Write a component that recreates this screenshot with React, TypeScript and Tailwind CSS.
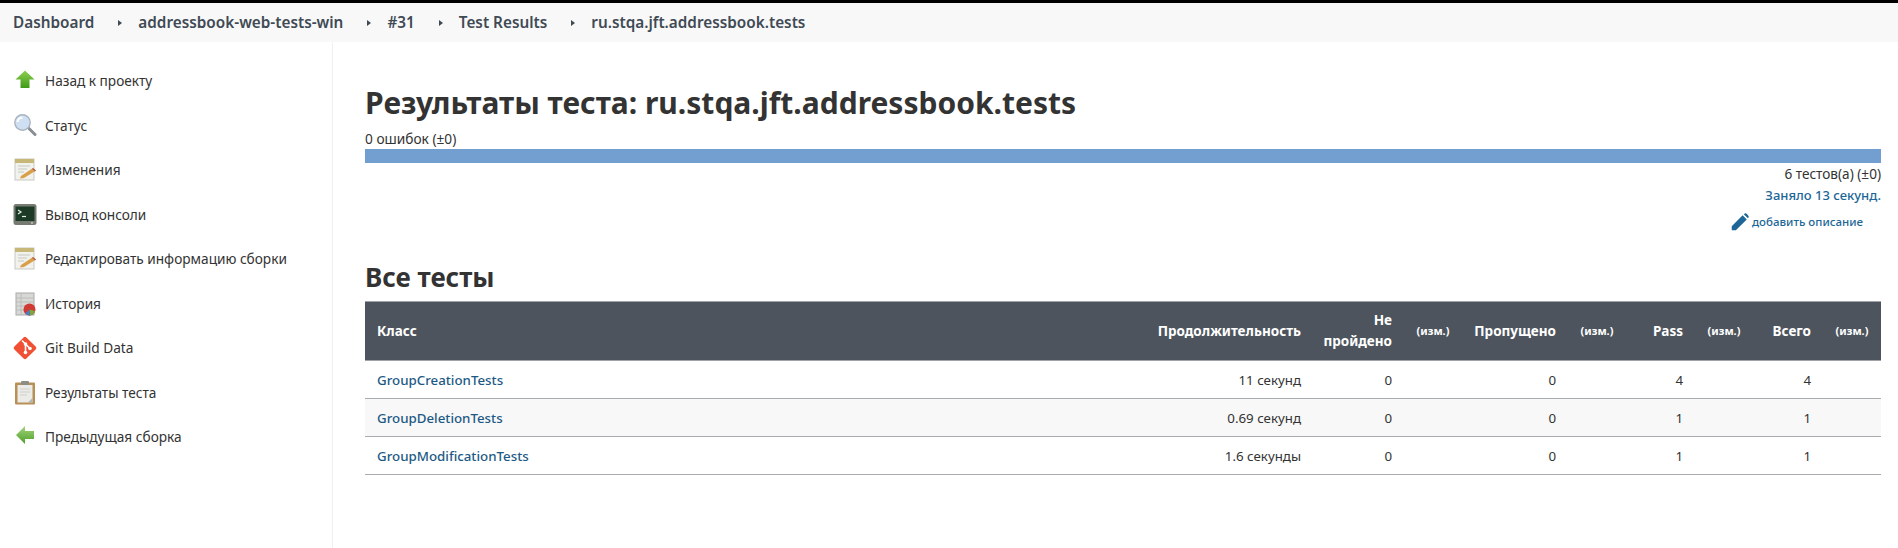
const crumbs = ['Dashboard', 'addressbook-web-tests-win', '#31', 'Test Results', 'ru.stqa.jft.addressbook.tests'];

function ArrowUpIcon() {
  return (
    <svg viewBox="0 0 24 24" className="w-6 h-6">
      <defs>
        <linearGradient id="up" x1="0" y1="0" x2="0" y2="1">
          <stop offset="0" stopColor="#8fd050" />
          <stop offset="1" stopColor="#3f9a18" />
        </linearGradient>
      </defs>
      <path d="M12 1.5 L21.5 10.5 H16.5 V19 H7.5 V10.5 H2.5 Z" fill="url(#up)" />
    </svg>
  );
}

function ArrowLeftIcon() {
  return (
    <svg viewBox="0 0 24 24" className="w-6 h-6">
      <defs>
        <linearGradient id="left" x1="0" y1="0" x2="0" y2="1">
          <stop offset="0" stopColor="#a3d47a" />
          <stop offset="1" stopColor="#4f9f2a" />
        </linearGradient>
      </defs>
      <path d="M3 10 L12 1 V6 H21 V14 H12 V19 Z" fill="url(#left)" />
    </svg>
  );
}

function SearchIcon() {
  return (
    <svg viewBox="0 0 24 24" className="w-6 h-6">
      <path d="M15.5 14 L22 20.5" stroke="#8a8f94" strokeWidth="3" strokeLinecap="round" />
      <circle cx="9.5" cy="8.5" r="7.7" fill="#cfe0f4" stroke="#a9b4bf" strokeWidth="1.4" />
      <path d="M4.5 8 a5 5 0 0 1 5 -4.5" stroke="#fff" strokeWidth="2" fill="none" />
    </svg>
  );
}

function NotepadIcon() {
  return (
    <svg viewBox="0 0 24 24" className="w-6 h-6">
      <rect x="2" y="1" width="19" height="21" fill="#f1f1ed" stroke="#c9c9c3" />
      <rect x="2" y="1" width="19" height="4" fill="#c8b878" />
      <path d="M5 8 H17 M5 11 H14 M5 14 H11" stroke="#c9c9c3" />
      <path d="M8 18 L20 10 L23 12.5 L11 20 L7 20.5 Z" fill="#d9a04a" />
      <path d="M20 10 L23 12.5 L22 13.5 L19 11 Z" fill="#b8604c" />
    </svg>
  );
}

function TerminalIcon() {
  return (
    <svg viewBox="0 0 24 24" className="w-6 h-6">
      <rect x="0.5" y="1" width="23" height="21" rx="2.5" fill="#777c72" />
      <rect x="2.5" y="3.5" width="19" height="14.5" fill="#1d3a26" />
      <path d="M5 7 L8 9 L5 11" stroke="#e4efe4" strokeWidth="1.2" fill="none" />
      <path d="M9 13.5 H13" stroke="#e4efe4" strokeWidth="1.2" />
      <rect x="18" y="19.4" width="2" height="1.2" fill="#d4d8d0" />
    </svg>
  );
}

function HistoryIcon() {
  return (
    <svg viewBox="0 0 24 24" className="w-6 h-6">
      <rect x="3" y="1" width="18" height="22" fill="#d8d8d6" stroke="#a8aaa8" />
      <path d="M8 1 V23 M3 6 H21 M3 10 H21 M3 14 H21 M3 18 H21" stroke="#bcbcba" />
      <circle cx="16.5" cy="17.5" r="6" fill="#d03a35" />
      <path d="M16.5 17.5 L22 19 A6 6 0 0 1 17 23.4 Z" fill="#7aa83c" />
      <path d="M16.5 17.5 L17 23.4 A6 6 0 0 1 12 21.5 Z" fill="#4f7fb8" />
    </svg>
  );
}

function GitIcon() {
  return (
    <svg viewBox="0 0 24 24" className="w-6 h-6">
      <rect x="3.5" y="3.5" width="17" height="17" rx="2" transform="rotate(45 12 12)" fill="#f05033" />
      <path d="M9 4.5 L12.5 8 M12.5 8 V16 M12.5 8 L17 12.5" stroke="#fff" strokeWidth="1.6" />
      <circle cx="12.5" cy="8" r="1.8" fill="#fff" />
      <circle cx="12.5" cy="16.5" r="1.8" fill="#fff" />
      <circle cx="17" cy="12.5" r="1.8" fill="#fff" />
    </svg>
  );
}

function ClipboardIcon() {
  return (
    <svg viewBox="0 0 24 24" className="w-6 h-6">
      <rect x="2" y="1.5" width="20" height="22" rx="1" fill="#b98f56" />
      <rect x="4.5" y="4" width="15" height="17.5" fill="#ebebe8" />
      <path d="M7 8 H17 M7 11 H17 M7 14 H14" stroke="#cfcfcb" />
      <path d="M15 21.5 L19.5 17 V21.5 Z" fill="#b4b4b0" />
      <rect x="8" y="0" width="8" height="4" rx="1" fill="#8c8c88" />
    </svg>
  );
}

function PencilIcon() {
  return (
    <svg viewBox="0 0 24 24" className="w-[18px] h-[18px]">
      <path
        d="M1 23 V17.5 L15.5 3 L21 8.5 L6.5 23 Z M17 1.5 L18.5 0.5 Q19.5 0 20.5 0.8 L23.2 3.5 Q24 4.5 23.5 5.5 L22.5 7 Z"
        fill="#1c6797"
      />
    </svg>
  );
}

const sideItems = [
  { label: 'Назад к проекту', icon: <ArrowUpIcon /> },
  { label: 'Статус', icon: <SearchIcon /> },
  { label: 'Изменения', icon: <NotepadIcon /> },
  { label: 'Вывод консоли', icon: <TerminalIcon /> },
  { label: 'Редактировать информацию сборки', icon: <NotepadIcon /> },
  { label: 'История', icon: <HistoryIcon /> },
  { label: 'Git Build Data', icon: <GitIcon /> },
  { label: 'Результаты теста', icon: <ClipboardIcon /> },
  { label: 'Предыдущая сборка', icon: <ArrowLeftIcon /> },
];

const rows = [
  { name: 'GroupCreationTests', time: '11 секунд', pass: 4, total: 4 },
  { name: 'GroupDeletionTests', time: '0.69 секунд', pass: 1, total: 1 },
  { name: 'GroupModificationTests', time: '1.6 секунды', pass: 1, total: 1 },
];

export default function App() {
  return (
    <div className="h-[548px] overflow-hidden bg-white text-[#333] text-[13.3px] font-['Noto_Sans','Open_Sans',sans-serif]">
      <div className="h-[3px] bg-black" />

      {/* Breadcrumbs */}
      <div className="h-[39px] bg-[#f8f8f8] flex items-center pl-[13px] text-[15.3px] font-semibold text-[#3f4a55]">
        {crumbs.map((crumb, i) => (
          <div key={crumb} className="flex items-center">
            {i > 0 && (
              <span className="ml-[24px] mr-[16px] border-y-[3.5px] border-l-[4px] border-y-transparent border-l-[#3f4a55]" />
            )}
            <span>{crumb}</span>
          </div>
        ))}
      </div>

      <div className="flex h-[506px]">
        {/* Sidebar */}
        <div className="w-[333px] shrink-0 border-r border-[#f0f0f2] pt-[17px] pl-[13px]">
          {sideItems.map((item) => (
            <div key={item.label} className="h-[44.5px] flex items-center gap-2 text-[13.65px] text-[#333]">
              {item.icon}
              <span>{item.label}</span>
            </div>
          ))}
        </div>

        {/* Main */}
        <div className="flex-1 pl-[32px] pr-[17px]">
          <h1 className="mt-[40px] text-[30px] leading-[42px] font-bold text-[#333]">
            Результаты теста: ru.stqa.jft.addressbook.tests
          </h1>
          <div className="mt-[6px] text-[13.7px] leading-[18px]">0 ошибок (±0)</div>
          <div className="mt-px h-[14px] bg-[#729fcf]" />
          <div className="text-right text-[13.6px] leading-[18px] mt-[2px]">6 тестов(а) (±0)</div>
          <div className="text-right text-[13px] leading-[18px] mt-[3px] font-medium text-[#1c6797]">Заняло 13 секунд.</div>
          <div className="flex justify-end items-center gap-[3px] pr-[18px] mt-[9px] text-[11.5px] font-medium text-[#1c6797]">
            <PencilIcon />
            <span>добавить описание</span>
          </div>

          <h2 className="mt-[28px] text-[26px] leading-[36px] font-bold text-[#333]">Все тесты</h2>

          <table className="w-full table-fixed border-collapse mt-[6px]">
            <colgroup>
              <col />
              <col className="w-[167px]" />
              <col className="w-[91px]" />
              <col className="w-[58px]" />
              <col className="w-[106px]" />
              <col className="w-[58px]" />
              <col className="w-[69px]" />
              <col className="w-[58px]" />
              <col className="w-[70px]" />
              <col className="w-[58px]" />
            </colgroup>
            <thead>
              <tr className="h-[59px] bg-[#4d545d] text-white text-[13.5px] font-bold border-y border-[#9fa3a8]">
                <th className="text-left pl-3">Класс</th>
                <th className="text-right pr-3">Продолжительность</th>
                <th className="text-right pr-3 leading-[21px]">Не пройдено</th>
                <th className="text-[11px] text-center">(изм.)</th>
                <th className="text-right pr-3">Пропущено</th>
                <th className="text-[11px] text-center">(изм.)</th>
                <th className="text-right pr-3">Pass</th>
                <th className="text-[11px] text-center">(изм.)</th>
                <th className="text-right pr-3">Всего</th>
                <th className="text-[11px] text-center">(изм.)</th>
              </tr>
            </thead>
            <tbody>
              {rows.map((row, i) => (
                <tr key={row.name} className={`h-[38px] border-b border-[#a8abb0] ${i === 1 ? 'bg-[#f8f8f8]' : 'bg-white'}`}>
                  <td className="pl-3 pt-[2px] font-medium text-[#1c5a85]">{row.name}</td>
                  <td className="text-right pr-3 pt-[2px]">{row.time}</td>
                  <td className="text-right pr-3 pt-[2px]">0</td>
                  <td />
                  <td className="text-right pr-3 pt-[2px]">0</td>
                  <td />
                  <td className="text-right pr-3 pt-[2px]">{row.pass}</td>
                  <td />
                  <td className="text-right pr-3 pt-[2px]">{row.total}</td>
                  <td />
                </tr>
              ))}
            </tbody>
          </table>
        </div>
      </div>
    </div>
  );
}
